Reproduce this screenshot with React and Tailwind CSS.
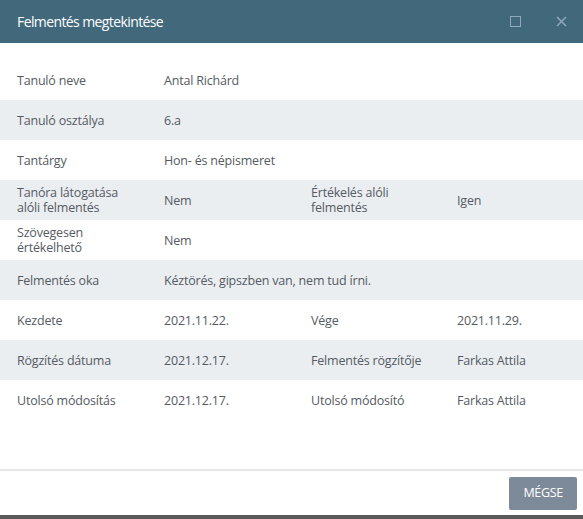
const rows = [
  { bg: "bg-white", cells: ["Tanuló neve", "Antal Richárd"] },
  { bg: "bg-[#ebeef1]", cells: ["Tanuló osztálya", "6.a"] },
  { bg: "bg-white", cells: ["Tantárgy", "Hon- és népismeret"] },
  { bg: "bg-[#ebeef1]", cells: ["Tanóra látogatása alóli felmentés", "Nem", "Értékelés alóli felmentés", "Igen"] },
  { bg: "bg-white", cells: ["Szövegesen értékelhető", "Nem"] },
  { bg: "bg-[#ebeef1]", cells: ["Felmentés oka", "Kéztörés, gipszben van, nem tud írni."], wide: true },
  { bg: "bg-white", cells: ["Kezdete", "2021.11.22.", "Vége", "2021.11.29."] },
  { bg: "bg-[#ebeef1]", cells: ["Rögzítés dátuma", "2021.12.17.", "Felmentés rögzítője", "Farkas Attila"] },
  { bg: "bg-white", cells: ["Utolsó módosítás", "2021.12.17.", "Utolsó módosító", "Farkas Attila"] },
];

export default function App() {
  return (
    <div
      className="w-[583px] h-[519px] flex flex-col bg-white text-[#555b63]"
      style={{ fontFamily: '"Open Sans", "Liberation Sans", sans-serif' }}
    >
      {/* fejléc */}
      <div className="h-[43px] shrink-0 bg-[#41697b] flex items-center pl-[17px] pr-[16px]">
        <span className="text-white text-[14px] tracking-[-0.6px]">Felmentés megtekintése</span>
        <div className="ml-auto flex items-center gap-[35px]">
          <div className="w-[11px] h-[11px] border-[1.7px] border-[#8eaab8]" />
          <svg width="11" height="11" viewBox="0 0 11 11" className="text-[#8eaab8]">
            <path d="M1 1L10 10M10 1L1 10" stroke="currentColor" strokeWidth="1.5" />
          </svg>
        </div>
      </div>

      {/* tartalom */}
      <div className="flex-1 pt-[17px]">
        {rows.map((row, i) => (
          <div
            key={i}
            className={`${row.bg} h-[40px] pl-[17px] grid grid-cols-[147px_147px_146px_1fr] items-center text-[12.5px] leading-[15px] tracking-[-0.2px]`}
          >
            <div className="pr-[28px]">{row.cells[0]}</div>
            <div className={row.wide ? "col-span-3" : ""}>{row.cells[1]}</div>
            {!row.wide && <div className="pr-[20px]">{row.cells[2]}</div>}
            {!row.wide && <div>{row.cells[3]}</div>}
          </div>
        ))}
      </div>

      {/* lábléc */}
      <div className="h-[46px] shrink-0 border-t-2 border-[#e4e6e8] flex items-center justify-end pr-[6px]">
        <button className="h-[33px] px-[14px] bg-[#7d8a99] text-white text-[12.5px] rounded-[2px] tracking-[-0.3px]">
          MÉGSE
        </button>
      </div>
      <div className="h-[4px] shrink-0 bg-[#5a5a5a]" />
    </div>
  );
}
